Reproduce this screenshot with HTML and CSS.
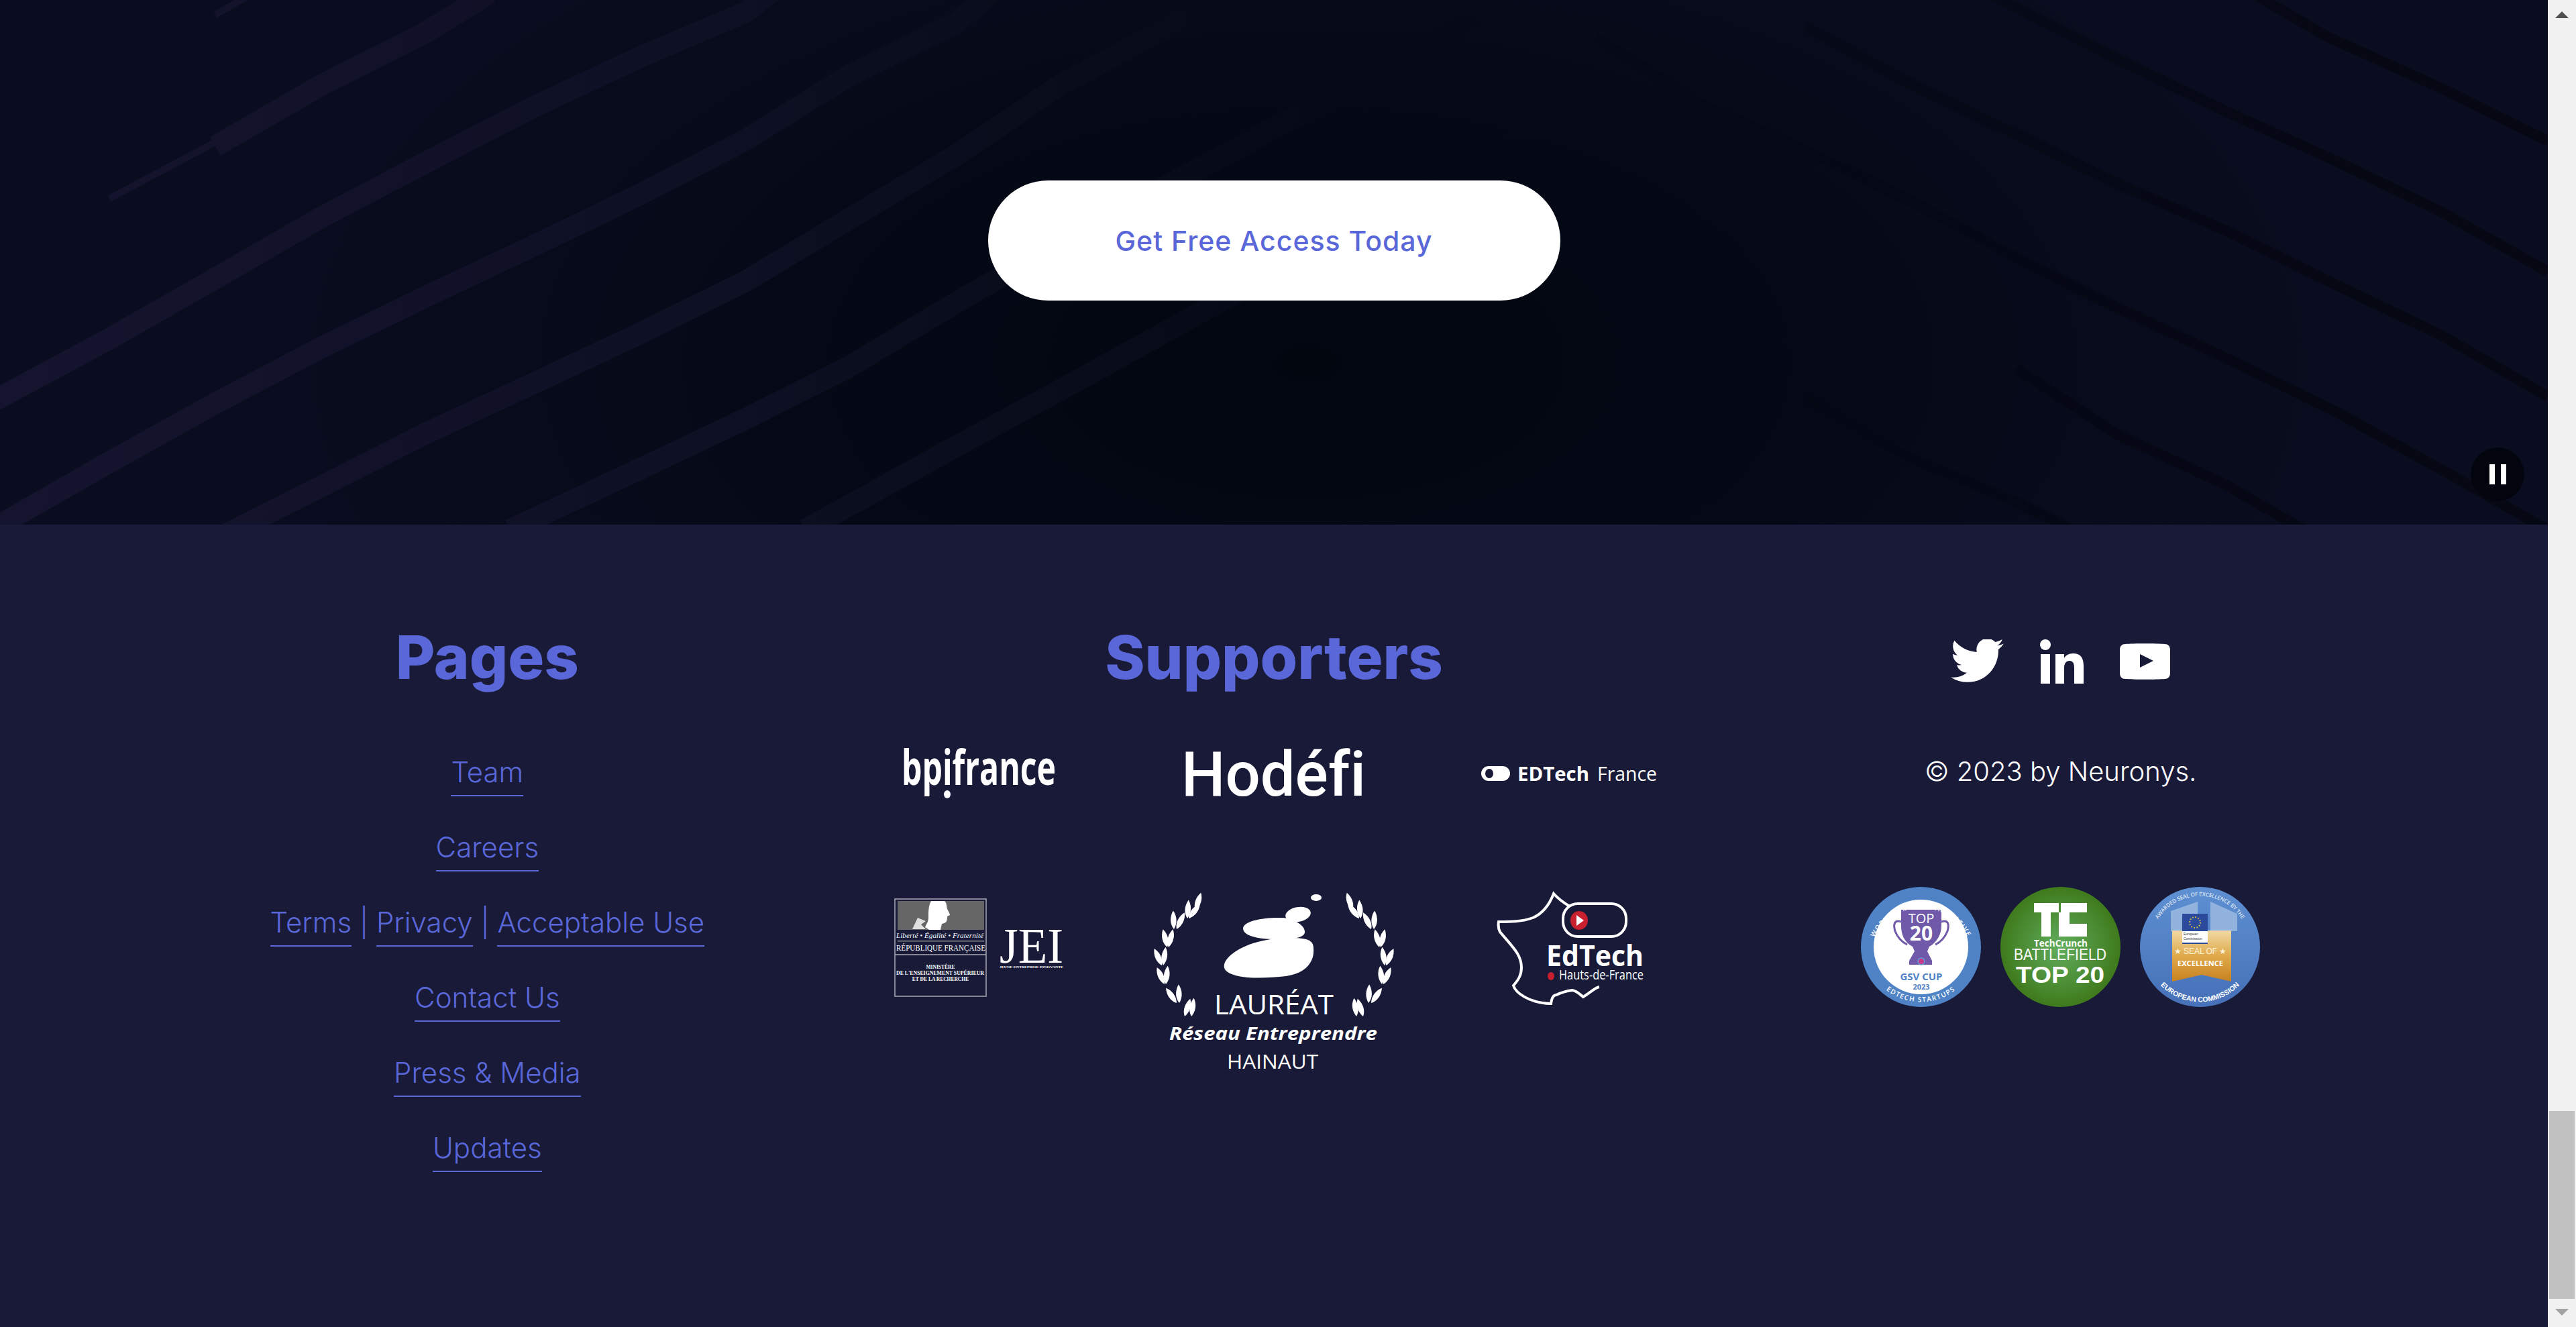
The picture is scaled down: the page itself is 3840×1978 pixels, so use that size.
FILE: index.html
```html
<!DOCTYPE html>
<html lang="en">
<head>
    <meta charset="UTF-8">
    <title>Neuronys</title>
    <link rel="stylesheet" href="styles.css">
</head>
<body>
<div class="page">
    <main class="content">
        <section class="hero">
            <svg class="facade" viewBox="0 0 3798 782">
                <defs>
                    <linearGradient id="lightFade" gradientUnits="userSpaceOnUse" x1="0" y1="0" x2="2300" y2="0">
                        <stop offset="0" stop-color="#15142f"/>
                        <stop offset="0.45" stop-color="#0e1024"/>
                        <stop offset="0.75" stop-color="#080b18"/>
                        <stop offset="1" stop-color="#060914" stop-opacity="0"/>
                    </linearGradient>
                    <linearGradient id="darkFade" gradientUnits="userSpaceOnUse" x1="2300" y1="0" x2="3500" y2="0">
                        <stop offset="0" stop-color="#03060f" stop-opacity="0.15"/>
                        <stop offset="1" stop-color="#04060f" stop-opacity="0.7"/>
                    </linearGradient>
                </defs>
                <g class="ridges-light">
                    <polyline points="-10,598 163,505 321,415 477,325 635,242 794,160 954,85 1112,18 1150,-12"/>
                    <polyline points="-10,788 163,689 321,601 477,519 635,442 794,367 954,290 1112,208 1265,113 1424,35 1480,-12"/>
                    <polyline points="330,800 477,726 635,646 794,572 954,497 1112,419 1265,327 1424,232 1583,125 1700,63 1810,0"/>
                    <polyline points="760,790 954,699 1112,624 1265,547 1424,452 1583,360 1800,245 2050,110 2260,-10"/>
                    <polyline points="321,218 477,128 635,48 730,-10"/>
                    <polyline class="thin" points="163,296 321,212"/>
                    <polyline class="thin" points="321,22 368,-5"/>
                    <polyline points="1200,790 1424,666 1583,580 1800,460 2300,190"/>
                </g>
                <g class="ridges-dark">
                    <polyline points="2964,-10 3160,90 3316,165 3478,238 3638,315 3798,405"/>
                    <polyline points="3366,-5 3470,55 3636,130 3798,210"/>
                    <polyline points="2692,40 2848,125 3005,200 3157,274 3319,344 3481,424 3638,499 3798,591"/>
                    <polyline points="2378,55 2535,155 2692,224 2848,299 3005,384 3157,459 3319,534 3481,613 3654,708 3798,790"/>
                    <polyline points="2692,593 2848,683 3005,748 3089,790"/>
                    <polyline points="3005,549 3157,648 3319,723 3434,790"/>
                </g>
            </svg>
            <a class="cta" href="#">Get Free Access Today</a>
            <button class="pause" aria-label="Pause"><span></span><span></span></button>
        </section>

        <footer class="footer">
            <div class="col">
                <h2>Pages</h2>
                <ul class="links">
                    <li><a href="#">Team</a></li>
                    <li><a href="#">Careers</a></li>
                    <li><a href="#">Terms</a> | <a href="#">Privacy</a> | <a href="#">Acceptable Use</a></li>
                    <li><a href="#">Contact Us</a></li>
                    <li><a href="#">Press &amp; Media</a></li>
                    <li><a href="#">Updates</a></li>
                </ul>
            </div>

            <div class="col">
                <h2>Supporters</h2>
                <div class="logos">
                    <svg class="logo" viewBox="0 0 226 74" width="226" height="74">
                        <text class="t-bpi" x="-2" y="54" textLength="230" lengthAdjust="spacingAndGlyphs">bpifrance</text>
                        <ellipse cx="66" cy="68" rx="5" ry="6" fill="#fff"/>
                    </svg>
                    <svg class="logo" viewBox="0 0 265 67" width="265" height="67">
                        <text class="t-hod" x="-6" y="66" textLength="275" lengthAdjust="spacingAndGlyphs">Hodéfi</text>
                    </svg>
                    <svg class="logo" viewBox="0 0 262 24" width="262" height="24">
                        <rect x="0" y="1" width="43" height="22" rx="11" fill="#fff"/>
                        <ellipse cx="12" cy="12" rx="6" ry="7" fill="#181a38"/>
                        <text class="t-edb" x="54" y="23" textLength="107" lengthAdjust="spacingAndGlyphs">EDTech</text>
                        <text class="t-edl" x="173" y="23" textLength="89" lengthAdjust="spacingAndGlyphs">France</text>
                    </svg>

                    <svg class="logo logo-rf" viewBox="0 0 252 147" width="252" height="147">
                        <rect x="1" y="1" width="136" height="145" fill="none" stroke="#a9a9b5" stroke-width="1.500"/>
                        <line x1="1" y1="84" x2="137" y2="84" stroke="#a9a9b5" stroke-width="1.500"/>
                        <rect x="5" y="4" width="129" height="43" fill="#666"/>
                        <path d="M55 4h20c3 2 3 7 4 12 2 4 4 7 4 9l-4 2c0 2 0 5-1 7-1 3-4 3-7 4l-2 9H52l-6-4c2-5 5-8 5-14 0-9 0-18 4-25z" fill="#fff"/>
                        <path d="M27 46l8-17 12 5-7 5 7 7z" fill="#fff" opacity="0.8"/>
                        <text class="t-rf-i" x="3" y="59" textLength="130" lengthAdjust="spacingAndGlyphs">Liberté • Égalité • Fraternité</text>
                        <rect x="5" y="63" width="129" height="1.500" fill="#8c8c96"/>
                        <text class="t-rf-b" x="3" y="78" textLength="133" lengthAdjust="spacingAndGlyphs">RÉPUBLIQUE FRANÇAISE</text>
                        <text class="t-rf-s" x="69" y="105" text-anchor="middle">MINISTÈRE</text>
                        <text class="t-rf-s" x="3" y="114" textLength="131" lengthAdjust="spacingAndGlyphs">DE L'ENSEIGNEMENT SUPÉRIEUR</text>
                        <text class="t-rf-s" x="69" y="123" text-anchor="middle">ET DE LA RECHERCHE</text>
                        <text class="t-jei" x="157" y="96" textLength="95" lengthAdjust="spacingAndGlyphs">JEI</text>
                        <text class="t-jei-s" x="157" y="104" textLength="95" lengthAdjust="spacingAndGlyphs">JEUNE ENTREPRISE INNOVANTE</text>
                    </svg>

                    <svg class="logo logo-re" viewBox="0 0 354 262" width="354" height="262">
                        <defs>
                            <path id="leaf" d="M0 0c-7-6-9-17-5-27 7 7 9 18 5 27z" fill="#fff"/>
                            <g id="wreath">
                                <use href="#leaf" transform="translate(44 182) rotate(28)"/>
                                <use href="#leaf" transform="translate(54 182) rotate(18)"/>
                                <use href="#leaf" transform="translate(32 162) rotate(-25)"/>
                                <use href="#leaf" transform="translate(36 162) rotate(8)"/>
                                <use href="#leaf" transform="translate(14 134) rotate(-14)"/>
                                <use href="#leaf" transform="translate(16 134) rotate(16)"/>
                                <use href="#leaf" transform="translate(10 106) rotate(-14)"/>
                                <use href="#leaf" transform="translate(12 106) rotate(18)"/>
                                <use href="#leaf" transform="translate(18 79) rotate(-3)"/>
                                <use href="#leaf" transform="translate(20 79) rotate(24)"/>
                                <use href="#leaf" transform="translate(28 52) rotate(8)"/>
                                <use href="#leaf" transform="translate(32 52) rotate(36)"/>
                                <use href="#leaf" transform="translate(48 36) rotate(14)"/>
                                <use href="#leaf" transform="translate(50 36) rotate(48)"/>
                                <use href="#leaf" transform="translate(60 24) rotate(28)"/>
                            </g>
                        </defs>
                        <use href="#wreath"/>
                        <use href="#wreath" transform="translate(354 0) scale(-1 1)"/>
                        <ellipse cx="240" cy="5" rx="8" ry="5" fill="#fff"/>
                        <ellipse cx="213" cy="30" rx="19" ry="11" fill="#fff" transform="rotate(-10 213 30)"/>
                        <path d="M131 50C133 40 160 34 190 35 205 36 222 45 223 55 224 62 215 66 195 67 170 68 130 66 131 50z" fill="#fff"/>
                        <path d="M236 80C238 100 225 118 195 122 160 126 115 127 104 112 98 100 115 85 140 75 165 66 200 62 225 67 233 69 236 74 236 80z" fill="#fff"/>
                        <text class="t-lau" x="88" y="179" textLength="178" lengthAdjust="spacingAndGlyphs">LAURÉAT</text>
                        <text class="t-res" x="21" y="217" textLength="310" lengthAdjust="spacingAndGlyphs">Réseau Entreprendre</text>
                        <text class="t-hai" x="107" y="260" textLength="136" lengthAdjust="spacingAndGlyphs">HAINAUT</text>
                    </svg>

                    <svg class="logo logo-hdf" viewBox="0 0 220 168" width="220" height="168">
                        <path d="M109 21C99 15 91 9 85 2 78 20 68 32 54 38 38 44 20 44 3 44c-1 6 0 11 2 15C22 80 37 92 37 112c0 11-4 18-12 27 3 10 22 26 56 27 1-8 4-13 8-13 8-4 16-6 24-7 6 1 10 5 16 10 10-6 18-14 24-15" fill="none" stroke="#fff" stroke-width="4"/>
                        <rect x="99" y="17" width="94" height="49" rx="22" fill="#181a38" stroke="#fff" stroke-width="4"/>
                        <ellipse cx="123" cy="42" rx="13" ry="14" fill="#c8202e"/>
                        <polygon points="119,34 130,42 119,50" fill="#fff"/>
                        <text class="t-edt" x="74" y="110" textLength="145" lengthAdjust="spacingAndGlyphs">EdTech</text>
                        <ellipse cx="81" cy="125" rx="5" ry="6" fill="#c8202e"/>
                        <text class="t-hdf" x="93" y="130" textLength="126" lengthAdjust="spacingAndGlyphs">Hauts-de-France</text>
                    </svg>
                </div>
            </div>

            <div class="col">
                <div class="social">
                    <svg class="icon-tw" viewBox="0 2.600 24 19.500" preserveAspectRatio="none"><path d="M23.950 4.570a10 10 0 0 1-2.820.770 4.960 4.960 0 0 0 2.160-2.720c-.950.550-2 .960-3.130 1.190a4.920 4.920 0 0 0-8.380 4.480C7.690 8.100 4.070 6.130 1.640 3.160a4.820 4.820 0 0 0-.660 2.480c0 1.700.870 3.210 2.190 4.100a4.900 4.900 0 0 1-2.230-.620v.060a4.920 4.920 0 0 0 3.950 4.830 5 5 0 0 1-2.210.080 4.940 4.940 0 0 0 4.600 3.420A9.870 9.870 0 0 1 0 19.540 13.990 13.990 0 0 0 7.560 21.750c9.050 0 14-7.500 14-13.980 0-.210 0-.420-.020-.630a9.940 9.940 0 0 0 2.410-2.570z"/></svg>
                    <svg class="icon-in" viewBox="0 0 65 66"><circle cx="8" cy="8" r="8"/><rect x="1" y="22" width="14" height="44"/><path d="M23 22h13v6c2-4 7-7 13-7 12 0 16 7 16 19v26H51V43c0-6-1-11-7-11s-8 5-8 11v23H23z"/></svg>
                    <svg class="icon-yt" viewBox="0 0 75 54"><path d="M8 1C20 0 55 0 67 1c5 0 8 3 8 9 0 10 .500 24 0 34 0 6-3 9-8 9-12 1-47 1-59 0-5 0-8-3-8-9-.500-10-.500-24 0-34 0-6 3-9 8-9z"/><polygon class="yt-play" points="30,16 50,26 30,36"/></svg>
                </div>
                <p class="copy">© 2023 by Neuronys.</p>
                <div class="badges">
                    <svg class="badge" viewBox="0 0 179 179">
                        <circle cx="89.500" cy="89.500" r="89.500" fill="#4f83c6"/>
                        <circle cx="89.500" cy="89.500" r="70.500" fill="#fff"/>
                        <path d="M60 34h60v24c0 12-6 24-18 31l-3 7 7 14v6H72v-6l8-14-3-7C64 82 60 70 60 58z" fill="#7059a8"/>
                        <path d="M60 52c-10-4-12 4-9 14 4 10 10 16 18 20M120 52c10-4 12 4 9 14-4 10-10 16-18 20" fill="none" stroke="#7059a8" stroke-width="3"/>
                        <circle cx="90" cy="111" r="5" fill="#c8388c" stroke="#5aa0d8" stroke-width="1.500"/>
                        <text class="b-top" x="90" y="54" text-anchor="middle">TOP</text>
                        <text class="b-20" x="90" y="80" text-anchor="middle">20</text>
                        <text class="b-gsv" x="90" y="139" text-anchor="middle">GSV CUP</text>
                        <text class="b-yr" x="90" y="153" text-anchor="middle">2023</text>
                        <path id="arcTop1" d="M13 100a77 77 0 0 1 153 0" fill="none"/>
                        <path id="arcBot1" d="M6 88a83.500 83.500 0 0 0 167 0" fill="none"/>
                        <text class="b-arc"><textPath href="#arcTop1" startOffset="50%" text-anchor="middle">WORLD'S MOST INNOVATIVE</textPath></text>
                        <text class="b-arc"><textPath href="#arcBot1" startOffset="50%" text-anchor="middle">EDTECH STARTUPS</textPath></text>
                    </svg>
                    <svg class="badge" viewBox="0 0 179 179">
                        <defs>
                            <radialGradient id="tcGrad"><stop offset="0" stop-color="#62ad5e"/><stop offset="1" stop-color="#3f7a1c"/></radialGradient>
                        </defs>
                        <circle cx="89.500" cy="89.500" r="89.500" fill="url(#tcGrad)"/>
                        <path d="M50 24h37v14h-12v36H61V38H50z" fill="#fff"/>
                        <path d="M90 24h39v14H90zM87 38h16v17h26v19H87z" fill="#fff"/>
                        <text class="b-tc" x="50" y="89" textLength="80" lengthAdjust="spacingAndGlyphs">TechCrunch</text>
                        <text class="b-bf" x="20" y="109" textLength="138" lengthAdjust="spacingAndGlyphs">BATTLEFIELD</text>
                        <text class="b-t20" x="23" y="143" textLength="132" lengthAdjust="spacingAndGlyphs">TOP 20</text>
                    </svg>
                    <svg class="badge" viewBox="0 0 179 179">
                        <defs>
                            <linearGradient id="ecBlue" x1="0" y1="0" x2="0" y2="1"><stop offset="0" stop-color="#5e90d2"/><stop offset="1" stop-color="#4670b8"/></linearGradient>
                            <linearGradient id="ecGold" x1="0" y1="0" x2="0" y2="1"><stop offset="0" stop-color="#f0d9a6"/><stop offset="0.5" stop-color="#e0a94a"/><stop offset="1" stop-color="#c88120"/></linearGradient>
                        </defs>
                        <circle cx="89.500" cy="89.500" r="89.500" fill="url(#ecBlue)"/>
                        <path d="M46 36l40-14v44H46zM105 22l40 18v26h-40z" fill="#a9c4e4" opacity="0.7"/>
                        <path d="M48 65h88v76l-44-10-44 10z" fill="url(#ecGold)"/>
                        <rect x="63" y="40" width="38" height="26" fill="#2c4a9c"/>
                        <circle cx="82" cy="53" r="8" fill="none" stroke="#f2d230" stroke-width="2" stroke-dasharray="1.500 2.700"/>
                        <rect x="63" y="66" width="38" height="17" fill="#fff"/>
                        <rect x="63" y="83" width="38" height="2" fill="#2c4a9c"/>
                        <text class="b-ec" x="65" y="72">European</text>
                        <text class="b-ec" x="65" y="79">Commission</text>
                        <text class="b-so" x="90" y="100" text-anchor="middle">★ SEAL OF ★</text>
                        <text class="b-ex" x="56" y="118" textLength="68" lengthAdjust="spacingAndGlyphs">EXCELLENCE</text>
                        <path id="arcTop3" d="M18 70a73.500 73.500 0 0 1 143 0" fill="none"/>
                        <path id="arcBot3" d="M8 90a81.500 81.500 0 0 0 163 0" fill="none"/>
                        <text class="b-arc3"><textPath href="#arcTop3" startOffset="50%" text-anchor="middle">AWARDED SEAL OF EXCELLENCE BY THE</textPath></text>
                        <text class="b-arc4"><textPath href="#arcBot3" startOffset="50%" text-anchor="middle">EUROPEAN COMMISSION</textPath></text>
                    </svg>
                </div>
            </div>
        </footer>
    </main>

    <aside class="scrollbar">
        <span class="arrow-up"></span>
        <span class="thumb"></span>
        <span class="arrow-down"></span>
    </aside>
</div>
</body>
</html>
```

FILE: styles.css
```css
html, body {
    margin: 0;
    padding: 0;
    overflow: hidden;
}
body {
    background-color: #181a38;
    font-family: "Inter", "Liberation Sans", sans-serif;
}
.page {
    display: flex;
    height: 1978px;
}
.content {
    width: 3798px;
    flex: none;
}

/* hero */
.hero {
    position: relative;
    height: 782px;
    background: radial-gradient(ellipse 1700px 900px at 1950px 540px, #01060f 0%, #0a0d20 100%);
    display: flex;
    justify-content: center;
    padding-top: 269px;
    box-sizing: border-box;
    overflow: hidden;
}
.facade {
    position: absolute;
    top: 0;
    left: 0;
    width: 100%;
    height: 100%;
}
.facade polyline {
    fill: none;
}
.ridges-light polyline {
    stroke: url(#lightFade);
    stroke-width: 32px;
}
.ridges-light polyline.thin {
    stroke-width: 10px;
}
.ridges-dark polyline {
    stroke: url(#darkFade);
    stroke-width: 16px;
}
.cta {
    position: relative;
    display: flex;
    align-items: center;
    justify-content: center;
    width: 853px;
    height: 179px;
    border-radius: 90px;
    background-color: #fff;
    color: #5a67d8;
    font-size: 41px;
    font-weight: 500;
    letter-spacing: 1px;
    text-decoration: none;
}
.pause {
    position: absolute;
    top: 667px;
    right: 35px;
    width: 80px;
    height: 80px;
    border: none;
    border-radius: 50%;
    background-color: #03050e;
    display: flex;
    align-items: center;
    justify-content: center;
    gap: 9px;
    padding: 0;
}
.pause span {
    width: 8px;
    height: 30px;
    background-color: #fff;
}

/* footer */
.footer {
    display: grid;
    grid-template-columns: repeat(3, minmax(0, 1fr));
    height: 1196px;
    padding: 0 140px;
    box-sizing: border-box;
    text-align: center;
}
.col {
    display: flex;
    flex-direction: column;
    align-items: center;
    padding-top: 143px;
}
.col h2 {
    margin: 0;
    font-size: 90px;
    font-weight: 800;
    line-height: 110px;
    color: #5a67d8;
}
.links {
    list-style: none;
    margin: 85px 0 0;
    padding: 0;
    color: #5a67d8;
    font-size: 42px;
    font-weight: 300;
}
.links li {
    height: 112px;
    line-height: 62px;
}
.links a {
    display: inline-block;
    color: #5a67d8;
    text-decoration: none;
    border-bottom: 2px solid #5a67d8;
    padding-bottom: 3px;
}
.logos {
    display: grid;
    flex: none;
    width: 1320px;
    grid-template-columns: repeat(3, 440px);
    grid-template-rows: 74px auto;
    row-gap: 140px;
    justify-items: center;
    align-items: center;
    margin-top: 81px;
}
.logo {
    display: block;
    overflow: visible;
}
.logo-rf, .logo-re, .logo-hdf {
    align-self: start;
}
.logo-rf {
    margin-top: 9px;
}
.logo-re {
    margin-top: 3px;
}
.logo-hdf {
    margin-left: 4px;
}
.logo text {
    fill: #fff;
}
.t-bpi { font: 700 72px "Open Sans", sans-serif; }
.t-hod { font: 500 93px "Roboto", sans-serif; font-variant-ligatures: none; }
.t-edb { font: 700 29px "Open Sans", sans-serif; }
.t-edl { font: 400 29px "Open Sans", sans-serif; }
.t-rf-i { font: italic 400 11px "Liberation Serif", serif; }
.t-rf-b { font: 400 13px "Liberation Serif", serif; }
.t-rf-s { font: 700 7.500px "Liberation Serif", serif; }
.t-jei { font: 400 74px "Liberation Serif", serif; }
.t-jei-s { font: 700 5px "Liberation Serif", serif; }
.t-lau { font: 400 41px "Open Sans", sans-serif; }
.t-res { font: italic 700 27px "Open Sans", sans-serif; }
.t-hai { font: 400 30px "Open Sans", sans-serif; }
.t-edt { font: 700 43px "Open Sans", sans-serif; }
.t-hdf { font: 400 20px "Open Sans", sans-serif; }

.social {
    display: flex;
    align-items: center;
    justify-content: center;
    gap: 54px;
    height: 67px;
    margin-top: 27px;
}
.social svg {
    display: block;
    fill: #fff;
}
.icon-tw {
    width: 79px;
    height: 65px;
}
.icon-in {
    width: 65px;
    height: 66px;
}
.icon-yt {
    width: 75px;
    height: 54px;
}
.social .yt-play {
    fill: #181a38;
}
.copy {
    margin: 100px 0 0;
    color: #fff;
    font-size: 40px;
    font-weight: 300;
    line-height: 62px;
}
.badges {
    display: flex;
    gap: 29px;
    margin-top: 141px;
}
.badge {
    display: block;
    width: 179px;
    height: 179px;
}
.b-top { font: 400 20px "Open Sans", sans-serif; fill: #fff; }
.b-20 { font: 700 30px "Open Sans", sans-serif; fill: #fff; }
.b-gsv { font: 700 15px "Open Sans", sans-serif; fill: #4f83c6; }
.b-yr { font: 700 11px "Open Sans", sans-serif; fill: #4f83c6; }
.b-arc { font: 600 10px "Open Sans", sans-serif; fill: #fff; letter-spacing: 1.500px; }
.b-tc { font: 700 15px "Open Sans", sans-serif; fill: #fff; }
.b-bf { font: 400 24px "Liberation Sans", sans-serif; fill: #fff; }
.b-t20 { font: 700 35px "Liberation Sans", sans-serif; fill: #fff; }
.b-ec { font: 400 5px "Liberation Sans", sans-serif; fill: #333; }
.b-so { font: 400 12px "Liberation Sans", sans-serif; fill: #fff5da; }
.b-ex { font: 700 11px "Open Sans", sans-serif; fill: #fff; }
.b-arc3 { font: 400 8px "Open Sans", sans-serif; fill: #fff; }
.b-arc4 { font: 700 10.500px "Liberation Sans", sans-serif; fill: #fff; }

/* scrollbar */
.scrollbar {
    width: 42px;
    flex: none;
    background-color: #f1f1f1;
    display: flex;
    flex-direction: column;
    align-items: center;
    padding-top: 17px;
    box-sizing: border-box;
}
.arrow-up {
    border-left: 10px solid transparent;
    border-right: 10px solid transparent;
    border-bottom: 10px solid #505050;
}
.thumb {
    width: 38px;
    height: 280px;
    margin-top: 1629px;
    background-color: #c1c1c1;
}
.arrow-down {
    margin-top: 15px;
    border-left: 10px solid transparent;
    border-right: 10px solid transparent;
    border-top: 10px solid #a3a3a3;
}
```
